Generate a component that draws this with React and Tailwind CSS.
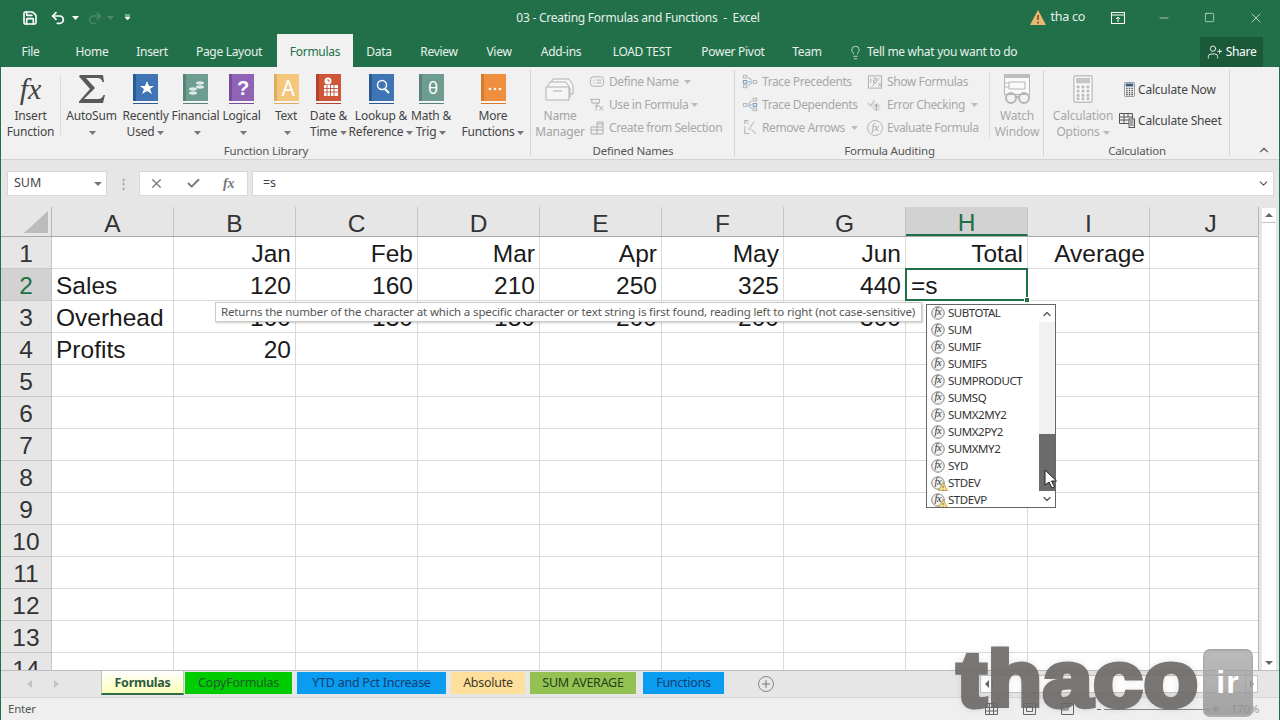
import React from "react";
import { Save, Undo2, Redo2, Lightbulb, UserPlus, X, Check, Minus, Square, Plus, ChevronUp, ChevronDown } from "lucide-react";

const Caret = ({ c = "#777" }) => (
  <svg width="7" height="4" viewBox="0 0 7 4" className="inline-block ml-[3px] align-middle">
    <path d="M0 0h7L3.5 4z" fill={c} />
  </svg>
);

const Book = ({ color, dark, children }) => (
  <svg width="25" height="30" viewBox="0 0 25 30">
    <rect x="0" y="0" width="25" height="28" fill={color} />
    <rect x="0" y="0" width="3" height="29" fill={dark} />
    <rect x="0" y="27" width="25" height="2" fill="#f4f4f4" />
    <rect x="0" y="29" width="25" height="1" fill={dark} />
    {children}
  </svg>
);

const Sigma = () => (
  <svg width="26" height="30" viewBox="0 0 26 30">
    <path d="M1 1h23l1 7h-1.500q-1-4-5-4H7l9 10L5 25h14q4 0 5.500-4H26l-2 8H0v-1.500L11 15 0 2.500z" fill="#595959" />
  </svg>
);

const Name = ({ className, children }) => (
  <div className={"flex flex-col items-center pt-[5px] shrink-0 " + className}>
    <div className="h-[34px] flex items-center justify-center">{children[0]}</div>
    <div className="mt-[2px] text-center leading-[16px] whitespace-nowrap">{children[1]}</div>
  </div>
);

const Group = ({ className, label, children }) => (
  <div className={"relative flex flex-col shrink-0 " + className}>
    <div className="flex h-[76px]">{children}</div>
    <div className="text-center text-[11.500px] leading-[16px] text-[#555]">{label}</div>
    <div className="absolute right-0 top-[3px] bottom-[3px] w-px bg-[#d3d3d3]" />
  </div>
);

const Small = ({ icon, children, className = "" }) => (
  <div className={"h-[23px] flex items-center gap-[4px] whitespace-nowrap tracking-[-0.4px] " + className}>
    <span className="w-[16px] h-[16px] flex items-center justify-center shrink-0">{icon}</span>
    <span>{children}</span>
  </div>
);

const G = "#aeaeae";
const DefineIcon = () => (
  <svg width="17" height="14" viewBox="0 0 17 14" fill="none" stroke={G}>
    <rect x="1.500" y="1.500" width="14" height="10" rx="3" />
    <path d="M5 5h1M5 8h1M8 5h5M8 8h5" />
  </svg>
);
const UseIcon = () => (
  <svg width="17" height="16" viewBox="0 0 17 16" fill="none" stroke={G}>
    <path d="M1 2h11M3 2v4h8V2M10 6q-2 0-2 3t-1 5M6 9h5M11 9l4 5M15 9l-4 5" />
  </svg>
);
const CreateIcon = () => (
  <svg width="16" height="15" viewBox="0 0 16 15" fill="none" stroke={G}>
    <path d="M2 14V7h6V2h6v12zM2 10h12M8 7v7M8 4h6M8 7h6" />
  </svg>
);
const TraceP = () => (
  <svg width="18" height="17" viewBox="0 0 18 17" fill="none" stroke={G}>
    <rect x="1.500" y="1.500" width="4" height="3" />
    <rect x="1.500" y="7.500" width="4" height="3" stroke="#6a8fb5" />
    <rect x="1.500" y="12.500" width="4" height="3" />
    <rect x="12.500" y="7.500" width="4" height="3" />
    <path d="M7 4l4 3M7 9h4M7 13l4-3" stroke="#7ea0c4" />
  </svg>
);
const TraceD = () => (
  <svg width="18" height="17" viewBox="0 0 18 17" fill="none" stroke={G}>
    <rect x="1.500" y="7.500" width="4" height="3" />
    <rect x="12.500" y="1.500" width="4" height="3" />
    <rect x="12.500" y="7.500" width="4" height="3" stroke="#6a8fb5" />
    <rect x="12.500" y="12.500" width="4" height="3" />
    <path d="M7 8l4-4M7 9h4M7 10l4 3" stroke="#7ea0c4" />
  </svg>
);
const RemoveIcon = () => (
  <svg width="17" height="17" viewBox="0 0 17 17" fill="none" stroke={G}>
    <path d="M3 1l4 4M3 1v4M3 1h4M13 2l-6 9M9 10l6 5M3 7v8h5" />
  </svg>
);
const ShowIcon = () => (
  <svg width="17" height="16" viewBox="0 0 17 16" fill="none" stroke={G}>
    <rect x="1.500" y="1.500" width="14" height="13" />
    <path d="M4 4v5M7 4h3v2H7v3h3M13 4l-8 9M12 9l3 4M15 9l-3 4" />
  </svg>
);
const ErrorIcon = () => (
  <svg width="17" height="16" viewBox="0 0 17 16" fill="none">
    <path d="M1 6l3 3 4-6" stroke="#b9c9b9" strokeWidth="1.500" />
    <circle cx="10" cy="10" r="4.500" fill="#dfdfdf" />
    <path d="M10 7v3.500M10 12v1.500" stroke="#999" strokeWidth="1.500" />
  </svg>
);
const FxCircle = ({ size = 15, warn = false }) => (
  <span className="relative inline-flex items-center justify-center">
    <svg width={size} height={size} viewBox="0 0 15 15">
      <circle cx="7.500" cy="7.500" r="6.700" fill="#f3f3f3" stroke="#777" />
      <path d="M3 12.500a6.500 6.500 0 0 0 9-1" stroke="#bbb" fill="none" />
    </svg>
    <span className="absolute inset-0 flex items-center justify-center italic font-['Liberation_Serif',serif] text-[10.500px] leading-none text-[#333] pb-[1px]">fx</span>
    {warn && (
      <svg width="10" height="9" viewBox="0 0 10 9" className="absolute right-[-3px] bottom-[-1px]">
        <path d="M5 .5L9.500 8.500H.5z" fill="#fbe28a" stroke="#a88a20" strokeWidth=".7" />
        <path d="M5 3.500v2.500M5 7v.8" stroke="#555" strokeWidth=".8" />
      </svg>
    )}
  </span>
);
const EvalIcon = () => (
  <span className="w-[16px] h-[16px] rounded-full border border-[#b5b5b5] flex items-center justify-center italic font-['Liberation_Serif',serif] text-[10.500px] text-[#a5a5a5]">fx</span>
);
const CalcIcon = ({ w = 14, h = 20, body = "#3d5a80", stroke = "#5f6b7a" }) => (
  <svg width={w} height={h} viewBox="0 0 14 20">
    <rect x=".5" y=".5" width="13" height="19" rx="1.500" fill={body === "none" ? "#fafafa" : "#fff"} stroke={stroke} />
    <rect x="2" y="2" width="10" height="4" fill={body === "none" ? "#c6c6c6" : body} />
    {[7.500, 10.500, 13.500, 16].map((y) =>
      [2.500, 6, 9.500].map((x) => <rect key={x + "-" + y} x={x} y={y} width="2" height="2" fill={body === "none" ? "#bcbcbc" : "#555"} />)
    )}
  </svg>
);

const functions = [
  ["SUBTOTAL"], ["SUM"], ["SUMIF"], ["SUMIFS"], ["SUMPRODUCT"], ["SUMSQ"], ["SUMX2MY2"],
  ["SUMX2PY2"], ["SUMXMY2"], ["SYD"], ["STDEV", true], ["STDEVP", true],
];

const colNames = ["A", "B", "C", "D", "E", "F", "G", "H", "I", "J"];
const rows = [
  { n: 1, c: ["", "Jan", "Feb", "Mar", "Apr", "May", "Jun", "Total", "Average", ""] },
  { n: 2, c: ["Sales", "120", "160", "210", "250", "325", "440", "", "", ""] },
  { n: 3, c: ["Overhead", "100", "130", "180", "200", "200", "300", "", "", ""] },
  { n: 4, c: ["Profits", "20", "", "", "", "", "", "", "", ""] },
  ...[5, 6, 7, 8, 9, 10, 11, 12, 13, 14].map((n) => ({ n, c: Array(10).fill("") })),
];

const tabs = [
  ["CopyFormulas", "w-[107px] ml-[1px] bg-[#00cc00] text-[#1c5c2c]"],
  ["YTD and Pct Increase", "w-[149px] bg-[#0a9cf0] text-[#123f70] ml-[5px]"],
  ["Absolute", "w-[74px] bg-[#ffdf9c] text-[#3e3a28] ml-[5px]"],
  ["SUM AVERAGE", "w-[106px] bg-[#93c152] text-[#25401a] ml-[5px]"],
  ["Functions", "w-[81px] bg-[#0a9cf0] text-[#123f70] ml-[7px]"],
];

const tabLink = "pt-[3px] flex items-center justify-center ";

export default function App() {
  return (
    <div className="relative w-[1280px] h-[720px] overflow-hidden border-x border-[#1f6f47] bg-[#e6e6e6] font-['Noto_Sans',sans-serif] text-[12px] tracking-[-0.25px] text-[#444]">
      {/* Title bar */}
      <div className="bg-[#22704a] text-[#e8f1ec] -mx-px">
        <div className="h-[34px] pt-[1px] grid grid-cols-[1fr_auto_1fr] items-center">
          <div className="flex items-center pl-[22px]">
            <Save size={16} strokeWidth={2.4} className="text-white" />
            <Undo2 size={16} strokeWidth={2.6} className="ml-[12px] text-white" />
            <span className="ml-[3px]"><Caret c="#fff" /></span>
            <Redo2 size={16} strokeWidth={2} className="ml-[8px] text-[#4e8a6c]" />
            <span className="ml-[1px]"><Caret c="#4e8a6c" /></span>
            <svg width="7" height="7" viewBox="0 0 7 7" className="ml-[10px]"><path d="M1 1h5M1 3h5L3.500 6z" stroke="#fff" fill="#fff" strokeWidth=".8" /></svg>
          </div>
          <div className="text-[12px] pr-[4px]">03 - Creating Formulas and Functions&nbsp; -&nbsp; Excel</div>
          <div className="flex items-center justify-end">
            <svg width="16" height="15" viewBox="0 0 16 15"><path d="M8 0l8 15H0z" fill="#e9b872" /><path d="M8 5v5M8 11.500v2" stroke="#7a3d10" strokeWidth="1.500" /></svg>
            <span className="ml-[4px] text-[12.500px]">tha co</span>
            <svg width="14" height="12" viewBox="0 0 14 12" fill="none" stroke="#fff" className="ml-[26px]"><rect x=".5" y=".5" width="13" height="11" /><path d="M1 3h12M7 10V5M5 7l2-2 2 2" /></svg>
            <Minus size={14} strokeWidth={1} className="ml-[32px] text-white" />
            <Square size={11} strokeWidth={1.300} className="ml-[33px] text-white" />
            <X size={16} strokeWidth={1} className="ml-[33px] mr-[16px] text-white" />
          </div>
        </div>
        <div className="h-[33px] flex items-stretch text-[12px] tracking-[-0.3px]">
          <div className={tabLink + "w-[61px]"}>File</div>
          <div className={tabLink + "w-[62px]"}>Home</div>
          <div className={tabLink + "w-[58px]"}>Insert</div>
          <div className={tabLink + "w-[96px]"}>Page Layout</div>
          <div className={tabLink + "w-[76px] bg-[#f1f1f1] text-[#22704a]"}>Formulas</div>
          <div className={tabLink + "w-[52px]"}>Data</div>
          <div className={tabLink + "w-[68px]"}>Review</div>
          <div className={tabLink + "w-[52px]"}>View</div>
          <div className={tabLink + "w-[72px]"}>Add-ins</div>
          <div className={tabLink + "w-[90px]"}>LOAD TEST</div>
          <div className={tabLink + "w-[92px]"}>Power Pivot</div>
          <div className={tabLink + "w-[56px]"}>Team</div>
          <div className="flex items-center pt-[3px] ml-[13px] gap-[4px]">
            <Lightbulb size={15} strokeWidth={1.200} />
            <span>Tell me what you want to do</span>
          </div>
          <div className="ml-auto mr-[17px] mt-[3px] w-[63px] flex items-center justify-center gap-[3px] bg-[#1a5a3a] text-white">
            <UserPlus size={16} strokeWidth={1.300} />
            <span>Share</span>
          </div>
        </div>
      </div>

      {/* Ribbon */}
      <div className="h-[93px] bg-[#f1f1f1] border-b border-[#d2d2d2] flex relative text-[12px] tracking-[-0.2px]">
        <Group className="w-[530px]" label="Function Library">
          <Name className="w-[59px]">
            <span className="italic font-['Liberation_Serif',serif] text-[30px] leading-none text-[#444]">fx</span>
            <>Insert<br />Function</>
          </Name>
          <div className="w-px my-[8px] bg-[#dcdcdc] shrink-0" />
          <Name className="w-[61px]"><Sigma /><>AutoSum<br /><Caret /></></Name>
          <Name className="w-[47px]">
            <Book color="#3f74b5" dark="#2b5a92"><path d="M14 7l2 5h5l-4 3 2 5-5-3-5 3 2-5-4-3h5z" fill="#fff" /></Book>
            <>Recently<br />Used<Caret /></>
          </Name>
          <Name className="w-[53px]">
            <Book color="#6e9c90" dark="#568277"><ellipse cx="17" cy="9" rx="4" ry="1.700" fill="#dfe9e6" /><ellipse cx="17" cy="13" rx="4" ry="1.700" fill="#dfe9e6" /><ellipse cx="10" cy="15" rx="4" ry="1.700" fill="#dfe9e6" /><ellipse cx="10" cy="19" rx="4" ry="1.700" fill="#dfe9e6" /></Book>
            <>Financial<br /><Caret /></>
          </Name>
          <Name className="w-[39px]">
            <Book color="#9063b5" dark="#784e9c"><text x="14" y="21" textAnchor="middle" fontSize="20" fontWeight="700" fontFamily="Liberation Sans" fill="#fff">?</text></Book>
            <>Logical<br /><Caret /></>
          </Name>
          <Name className="w-[46px] ml-[2px]">
            <Book color="#f4c77c" dark="#e0ad5c"><text x="14" y="22" textAnchor="middle" fontSize="21" fontFamily="Noto Sans" fill="#fff">A</text></Book>
            <>Text<br /><Caret /></>
          </Name>
          <Name className="w-[39px]">
            <Book color="#d0563a" dark="#b34229"><rect x="8" y="11" width="14" height="11" fill="#fff" /><path d="M8 14.500h14M8 18h14M11 11v11M14.500 11v11M18 11v11" stroke="#b34229" strokeWidth=".8" /><circle cx="12" cy="7" r="3.500" fill="#fff" /><path d="M12 5v2h2" stroke="#b34229" strokeWidth=".8" fill="none" /></Book>
            <>Date &amp;<br />Time<Caret /></>
          </Name>
          <Name className="w-[66px]">
            <Book color="#3f74b5" dark="#2b5a92"><circle cx="13" cy="11" r="4.500" fill="none" stroke="#fff" strokeWidth="1.500" /><path d="M16 15l4 4" stroke="#fff" strokeWidth="2" /></Book>
            <>Lookup &amp;<br />Reference<Caret /></>
          </Name>
          <Name className="w-[34px]">
            <Book color="#6e9c90" dark="#568277"><text x="14" y="20" textAnchor="middle" fontSize="17" fontFamily="Noto Sans" fill="#fff">θ</text></Book>
            <>Math &amp;<br />Trig<Caret /></>
          </Name>
          <Name className="w-[64px] ml-[13px]">
            <Book color="#ef8e3e" dark="#d67a2c"><circle cx="9" cy="15" r="1.300" fill="#fff" /><circle cx="14" cy="15" r="1.300" fill="#fff" /><circle cx="19" cy="15" r="1.300" fill="#fff" /></Book>
            <>More<br />Functions<Caret /></>
          </Name>
        </Group>

        <Group className="w-[204px] text-[#a3a3a3]" label="Defined Names">
          <Name className="w-[58px]">
            <svg width="30" height="30" viewBox="0 0 30 30" fill="#f6f6f6" stroke="#b0b0b0"><path d="M8 5h16l4 6v9H6V9z" /><path d="M5 8h16l4 6v9H3V12z" /><path d="M1 13h23v13H1z" /><path d="M8 17h9" /></svg>
            <>Name<br />Manager</>
          </Name>
          <div className="pt-[3px] text-[#a8a8a8]">
            <Small icon={<DefineIcon />}>Define Name <Caret c="#bbb" /></Small>
            <Small icon={<UseIcon />}>Use in Formula<Caret c="#bbb" /></Small>
            <Small icon={<CreateIcon />}>Create from Selection</Small>
          </div>
        </Group>

        <Group className="w-[309px]" label="Formula Auditing">
          <div className="pt-[3px] pl-[7px] w-[132px] text-[#a8a8a8] shrink-0">
            <Small icon={<TraceP />}>Trace Precedents</Small>
            <Small icon={<TraceD />}>Trace Dependents</Small>
            <Small icon={<RemoveIcon />}>Remove Arrows <Caret c="#bbb" /></Small>
          </div>
          <div className="pt-[3px] w-[122px] text-[#a8a8a8] shrink-0">
            <Small icon={<ShowIcon />}>Show Formulas</Small>
            <Small icon={<ErrorIcon />}>Error Checking <Caret c="#bbb" /></Small>
            <Small icon={<EvalIcon />}>Evaluate Formula</Small>
          </div>
          <div className="w-px my-[5px] bg-[#dcdcdc] shrink-0" />
          <Name className="w-[54px] text-[#a8a8a8]">
            <svg width="29" height="32" viewBox="0 0 29 32" fill="none" stroke="#b5b5b5"><rect x="1.500" y="1.500" width="25" height="20" fill="#fafafa" /><rect x="1" y="1" width="26" height="4" fill="#bdbdbd" stroke="none" /><path d="M6 9h16v7H6zM2 10h4M2 14h4" /><circle cx="8" cy="25" r="5" strokeWidth="2" /><circle cx="21" cy="25" r="5" strokeWidth="2" /><path d="M12 24h5" strokeWidth="2" /></svg>
            <>Watch<br />Window</>
          </Name>
        </Group>

        <Group className="w-[186px]" label="Calculation">
          <Name className="w-[78px] text-[#a8a8a8]">
            <CalcIcon w={20} h={28} body="none" stroke="#c0c0c0" />
            <>Calculation<br />Options<Caret c="#bbb" /></>
          </Name>
          <div className="pt-[7px]">
            <div className="h-[31px] flex items-center gap-[2px] whitespace-nowrap"><span className="w-[14px] flex justify-center"><CalcIcon w={11} h={15} /></span><span>Calculate Now</span></div>
            <div className="h-[31px] flex items-center gap-[3px] -ml-[3px] whitespace-nowrap">
              <svg width="16" height="15" viewBox="0 0 16 15" fill="none" stroke="#555"><path d="M.5.5h13v10H.5zM.5 4h13M5 1v10M9 1v3M1 7h9" /><rect x="10" y="6" width="5.500" height="8.500" fill="#f1f1f1" /><path d="M11 8h3.500M11 10h3.500M11 12h3.500" /></svg>
              <span>Calculate Sheet</span>
            </div>
          </div>
        </Group>
        <ChevronUp size={14} strokeWidth={2} className="absolute right-[8px] bottom-[2px] text-[#666]" />
      </div>

      {/* Formula bar */}
      <div className="h-[47px] bg-[#e6e6e6] flex items-start pt-[11px] pl-[6px] pr-[5px]">
        <div className="w-[100px] h-[25px] bg-white border border-[#d8d8d8] flex items-center justify-between pl-[6px] pr-[3px] text-[12.500px] tracking-normal">
          <span>SUM</span>
          <svg width="8" height="4" viewBox="0 0 8 4" className="mr-[1px]"><path d="M0 0h8L4 4z" fill="#777" /></svg>
        </div>
        <div className="w-[32px] h-[25px] flex items-center justify-center text-[#aaa] text-[13px] font-bold leading-none">⋮</div>
        <div className="w-[109px] h-[25px] bg-white border border-[#d8d8d8] flex items-center gap-[22px] pl-[9px]">
          <X size={15} strokeWidth={2} className="text-[#777]" />
          <Check size={15} strokeWidth={3} className="text-[#777]" />
          <span className="italic font-['Liberation_Serif',serif] text-[14px] font-bold text-[#777]">fx</span>
        </div>
        <div className="ml-[4px] flex-1 h-[25px] bg-white border border-[#d8d8d8] flex items-center justify-between pl-[10px] pr-[3px]">
          <span className="text-[12.500px]">=s</span>
          <ChevronDown size={13} strokeWidth={2} className="text-[#555]" />
        </div>
      </div>

      {/* Grid */}
      <div className="h-[463px] flex font-['Liberation_Sans',Arial,sans-serif] text-[24.500px] tracking-normal leading-none">
        <div className="flex-1 min-w-0 overflow-hidden bg-white">
          <div className="flex h-[30px] w-max bg-[#e6e6e6] border-b border-[#a8a8a8]">
            <div className="w-[51px] shrink-0 border-r border-[#b5b5b5] flex items-end justify-end pr-[3px] pb-[3px]">
              <svg width="24" height="22" viewBox="0 0 24 22"><path d="M24 0v22H0z" fill="#bcbcbc" /></svg>
            </div>
            {colNames.map((c) => (
              <div key={c} className={"w-[122px] pt-[5px] shrink-0 flex items-center justify-center border-r border-[#c6c6c6] " + (c === "H" ? "bg-[#d2d2d2] text-[#1f6f47] border-b-2 border-b-[#1f6f47]" : "text-[#333]")}>{c}</div>
            ))}
          </div>
          {rows.map((r) => (
            <div key={r.n} className="flex h-[32px] w-max">
              <div className={"w-[51px] pt-[4px] shrink-0 flex items-center justify-center border-b border-r border-[#c6c6c6] " + (r.n === 2 ? "bg-[#d2d2d2] text-[#1f6f47]" : "bg-[#e6e6e6] text-[#333]")}>{r.n}</div>
              {r.c.map((v, i) => (
                <div key={i} className={"relative w-[122px] pt-[4px] shrink-0 flex items-center border-b border-r border-[#dadada] text-[#1a1a1a] " + (i === 0 ? "justify-start pl-[4px]" : "justify-end pr-[4px]")}>
                  {v}
                  {r.n === 2 && i === 7 && (
                    <div className="absolute left-[-1px] top-[-1px] w-[123px] h-[33px] border-2 border-[#1f6f47] flex items-center pl-[4px] pt-[3px] bg-white z-10">
                      =s
                      <span className="absolute right-[-4px] bottom-[-4px] w-[6px] h-[6px] bg-[#1f6f47] border border-white" />
                    </div>
                  )}
                </div>
              ))}
            </div>
          ))}
        </div>
        <div className="w-[21px] shrink-0 pl-[3px] pr-[3px] flex flex-col border-l border-[#b5b5b5] pt-[1px]">
          <div className="h-[15px] bg-white border-b border-[#c4c4c4] flex items-center justify-center">
            <svg width="8" height="4" viewBox="0 0 8 4"><path d="M4 0l4 4H0z" fill="#666" /></svg>
          </div>
          <div className="flex-1 bg-white" />
          <div className="h-[15px] bg-white flex items-center justify-center">
            <svg width="8" height="4" viewBox="0 0 8 4"><path d="M0 0h8L4 4z" fill="#666" /></svg>
          </div>
        </div>
      </div>

      {/* Sheet tabs */}
      <div className="h-[27px] bg-[#e6e6e6] border-t border-[#bdbdbd] flex items-stretch text-[12.500px]">
        <div className="w-[100px] flex items-center gap-[22px] pl-[26px] text-[#bbb] shrink-0">
          <svg width="5" height="8" viewBox="0 0 5 8"><path d="M5 0v8L0 4z" fill="#c4c4c4" /></svg>
          <svg width="5" height="8" viewBox="0 0 5 8"><path d="M0 0v8l5-4z" fill="#c4c4c4" /></svg>
        </div>
        <div className="w-[83px] h-[24px] pt-[2px] flex items-center justify-center font-bold text-[#2d5c3c] bg-gradient-to-b from-white to-[#fdfdb8] border-b-2 border-[#2d6e46] border-x border-x-[#c4c4c4]">Formulas</div>
        {tabs.map(([t, c]) => (
          <div key={t} className={"h-[22px] mt-[1px] pt-[1px] flex items-center justify-center " + c}>{t}</div>
        ))}
        <div className="ml-[34px] flex items-center text-[#777]">
          <span className="w-[16px] h-[16px] rounded-full border border-[#888] flex items-center justify-center"><Plus size={12} strokeWidth={2} /></span>
        </div>
        <div className="ml-auto mr-[21px] my-[4px] w-[278px] bg-white border border-[#c4c4c4] flex items-center justify-between">
          <span className="w-[12px] h-full flex items-center justify-center border-r border-[#c4c4c4]"><svg width="4" height="8" viewBox="0 0 4 8"><path d="M4 0v8L0 4z" fill="#666" /></svg></span>
          <span className="w-[12px] h-full flex items-center justify-center border-l border-[#c4c4c4]"><svg width="4" height="8" viewBox="0 0 4 8"><path d="M0 0v8l4-4z" fill="#666" /></svg></span>
        </div>
      </div>

      {/* Status bar */}
      <div className="h-[23px] bg-[#efefef] border-t border-[#d8d8d8] flex items-center pl-[7px] text-[11.500px] text-[#555]">
        <span>Enter</span>
        <div className="ml-auto flex items-center pr-[20px]">
          <svg width="13" height="12" viewBox="0 0 13 12" fill="none" stroke="#666"><path d="M.5.5h12v11H.5zM4.500 1v10M8.500 1v10M1 4.500h11M1 8h11" /></svg>
          <svg width="13" height="12" viewBox="0 0 13 12" fill="none" stroke="#666" className="ml-[25px]"><path d="M.5.5h12v11H.5zM3.500 3.500h6v5h-6z" /></svg>
          <svg width="13" height="12" viewBox="0 0 13 12" fill="none" stroke="#666" className="ml-[25px]"><path d="M.5.5h12v11H.5zM1 7h6V1" /></svg>
          <span className="ml-[23px] w-[4px] h-px bg-[#666]" />
          <span className="ml-[3px] w-[106px] h-px bg-[#888]" />
          <Plus size={10} strokeWidth={2} className="ml-[1px] text-[#666]" />
          <span className="ml-[10px] text-[#999]">170%</span>
        </div>
      </div>

      {/* Tooltip */}
      <div className="absolute left-[214px] top-[302px] w-[707px] h-[20px] px-[5px] pb-[1px] bg-white border border-[#c9c9c9] shadow-[1px_1px_2px_rgba(0,0,0,0.2)] flex items-center text-[11.500px] tracking-[-0.14px] text-[#555] whitespace-nowrap">
        Returns the number of the character at which a specific character or text string is first found, reading left to right (not case-sensitive)
      </div>

      {/* Autocomplete */}
      <div className="absolute left-[925px] top-[304px] w-[130px] h-[204px] bg-white border border-[#666] flex text-[12px] text-[#333]">
        <div className="flex-1 pl-[4px] -mt-px overflow-hidden">
          {functions.map(([f, w]) => (
            <div key={f} className="h-[17px] flex items-center">
              <FxCircle size={14} warn={w} />
              <span className="ml-[3px] text-[11.500px] tracking-[-0.45px]">{f}</span>
            </div>
          ))}
        </div>
        <div className="w-[16px] bg-[#f1f1f1] flex flex-col items-center shrink-0">
          <div className="h-[17px] w-full bg-white flex items-center justify-center"><ChevronUp size={12} strokeWidth={2.500} className="text-[#555]" /></div>
          <div className="flex-1 w-full relative">
            <div className="absolute left-0 right-0 top-[112px] h-[57px] bg-[#6b6b6b]" />
          </div>
          <div className="h-[17px] w-full bg-white flex items-center justify-center"><ChevronDown size={12} strokeWidth={2.500} className="text-[#555]" /></div>
        </div>
      </div>

      {/* Mouse cursor */}
      <svg width="13" height="20" viewBox="0 0 13 20" className="absolute left-[1043px] top-[469px]">
        <path d="M1 1v15l4-3 3 6 2.500-1-3-6h5z" fill="#fff" stroke="#222" strokeWidth="1" />
      </svg>

      {/* Watermark */}
      <div className="absolute left-[1202px] top-[649px] w-[50px] h-[68px] rounded-[7px] bg-gradient-to-b from-[#ababab]/80 to-[#8f8f8f]/80 border-2 border-[#a8a8a8]/60 flex items-center justify-center pb-[3px]">
        <span className="font-['Liberation_Sans',sans-serif] font-bold text-[32px] tracking-[1px] leading-none text-white">ir</span>
      </div>
      <div className="absolute left-[956px] top-[633px] opacity-90 origin-left scale-x-[1.15] font-['Liberation_Sans',sans-serif] font-bold text-[77px] leading-[92px] tracking-[1px] text-[#6b6866] [-webkit-text-stroke:5px_#6b6866] [text-shadow:0_0_8px_rgba(90,90,90,0.35)]">thaco</div>
    </div>
  );
}
